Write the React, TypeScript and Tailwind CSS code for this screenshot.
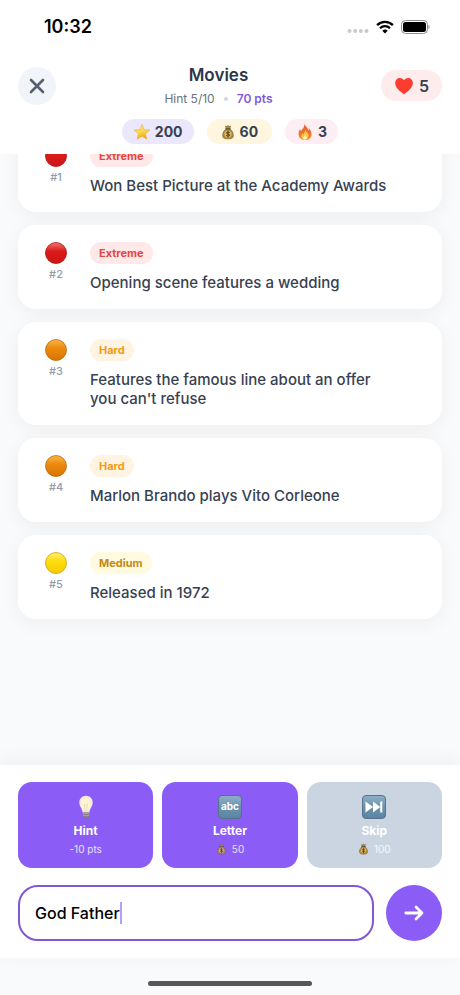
import React, { useLayoutEffect, useRef, useState } from 'react';
import clsx from 'clsx';

type Difficulty = 'Extreme' | 'Hard' | 'Medium';

interface HintItem {
  id: number;
  difficulty: Difficulty;
  text: string;
}

const hints: HintItem[] = [
  { id: 1, difficulty: 'Extreme', text: 'Won Best Picture at the Academy Awards' },
  { id: 2, difficulty: 'Extreme', text: 'Opening scene features a wedding' },
  { id: 3, difficulty: 'Hard', text: "Features the famous line about an offer you can't refuse" },
  { id: 4, difficulty: 'Hard', text: 'Marlon Brando plays Vito Corleone' },
  { id: 5, difficulty: 'Medium', text: 'Released in 1972' },
];

const badgeStyles: Record<Difficulty, string> = {
  Extreme: 'bg-[#fee8e8] text-[#e5453f]',
  Hard: 'bg-[#fff3e2] text-[#f59a14]',
  Medium: 'bg-[#fffae0] text-[#c48a12]',
};

const ballColors: Record<Difficulty, { top: string; mid: string; bottom: string; edge: string }> = {
  Extreme: { top: '#f0776f', mid: '#dc1a1a', bottom: '#d01414', edge: '#a81414' },
  Hard: { top: '#f9b64a', mid: '#ec8a0c', bottom: '#d87400', edge: '#b96a10' },
  Medium: { top: '#ffee70', mid: '#ffdd0c', bottom: '#f6cc00', edge: '#d0a010' },
};

function Ball({ difficulty }: { difficulty: Difficulty }) {
  const c = ballColors[difficulty];
  const id = `ball-${difficulty}`;
  return (
    <svg viewBox="0 0 22 22" className="h-[22px] w-[22px]" aria-hidden="true">
      <defs>
        <linearGradient id={id} x1="0" y1="0" x2="0" y2="1">
          <stop offset="0" stopColor={c.top} />
          <stop offset="0.42" stopColor={c.mid} />
          <stop offset="1" stopColor={c.bottom} />
        </linearGradient>
      </defs>
      <circle cx="11" cy="11" r="10.5" fill={`url(#${id})`} stroke={c.edge} strokeWidth="0.8" />
    </svg>
  );
}

function StarIcon() {
  return (
    <svg viewBox="0 0 18 18" className="h-[18px] w-[18px]" aria-hidden="true">
      <defs>
        <linearGradient id="star" x1="0" y1="0" x2="0.3" y2="1">
          <stop offset="0" stopColor="#fdf0a0" />
          <stop offset="0.55" stopColor="#fdd84e" />
          <stop offset="1" stopColor="#f2a81d" />
        </linearGradient>
      </defs>
      <path
        d="M9 1.6 11.1 6.7 16.8 7.1 12.4 10.8 13.9 16.2 9 13.2 4.1 16.2 5.6 10.8 1.2 7.1 6.9 6.7Z"
        fill="url(#star)"
        stroke="#eeb137"
        strokeWidth="0.7"
        strokeLinejoin="round"
      />
    </svg>
  );
}

function MoneyBag({ className }: { className: string }) {
  return (
    <svg viewBox="0 0 16 18" className={className} aria-hidden="true">
      <path
        d="M5.2 2.1 6.6 2.8 8 1.6 9.3 2.8 11 2.1 9.9 5.4C12.6 7.2 14.2 10 14.1 13.3 14.1 15.8 12.6 16.8 8 16.8S1.9 15.8 1.9 13.3C1.8 10 3.4 7.2 6.1 5.4Z"
        fill="#b08a3e"
        stroke="#79602c"
        strokeWidth="0.7"
        strokeLinejoin="round"
      />
      <path d="M5.5 5.4h5" stroke="#5f4a20" strokeWidth="1.3" strokeLinecap="round" />
      <circle cx="8" cy="11.3" r="4" fill="#d9b866" />
      <path
        d="M9.9 9.6C9.4 8.8 6.3 8.5 6.3 10.1c0 1.6 3.6.8 3.6 2.5 0 1.6-3.2 1.4-3.8.4M8 7.8v7"
        fill="none"
        stroke="#49391b"
        strokeWidth="1.1"
        strokeLinecap="round"
      />
    </svg>
  );
}

function FireIcon() {
  return (
    <svg viewBox="0 0 18 18" className="h-[18px] w-[18px]" aria-hidden="true">
      <defs>
        <linearGradient id="fire" x1="0" y1="0" x2="0" y2="1">
          <stop offset="0" stopColor="#ee5a2b" />
          <stop offset="1" stopColor="#f4842c" />
        </linearGradient>
      </defs>
      <path
        d="M8.2 1C9.6 3.4 12.1 4.8 12.2 7.7 12.8 7.2 13 6.3 12.8 5.3 14.5 7 15.6 9.1 15.5 11.4 15.4 14.8 12.7 17 9 17 5.2 17 2.7 14.6 2.6 11.3 2.5 9.2 3.3 7.5 4 6c.3 1 .6 1.6 1.3 2.1C5.6 6.2 8.9 4.9 8.2 1Z"
        fill="url(#fire)"
      />
      <path
        d="M9.6 6.5C9.6 9 12.8 10.1 12.6 13 12.5 15.4 11 16.7 9 16.7c-2.2 0-3.7-1.4-3.7-3.5 0-1.6.6-2.3 1.3-3.3.1 1 .4 1.3.8 1.5C8 9.7 9.1 8.9 9.6 6.5Z"
        fill="#fdc64b"
      />
      <path d="M9 11.5c.3 1.5 1.8 1.8 1.7 3.3 0 1.2-.7 1.9-1.7 1.9s-1.8-.7-1.8-1.9C7.2 13.4 8.6 13 9 11.5Z" fill="#fff2a6" />
    </svg>
  );
}

function HeartIcon() {
  return (
    <svg viewBox="0 0 20 18" className="h-[18px] w-5" aria-hidden="true">
      <path
        d="M10 3.2C8.9 1.6 7.4.9 5.7.9 3.2.9 1.2 3 1.2 6c0 4.6 4.3 8 8.8 11.2C14.5 14 18.8 10.6 18.8 6c0-3-2-5.1-4.5-5.1-1.7 0-3.2.7-4.3 2.3Z"
        fill="#fd3c30"
      />
    </svg>
  );
}

function BulbIcon() {
  return (
    <svg viewBox="0 0 24 24" className="h-6 w-6" aria-hidden="true">
      <defs>
        <radialGradient id="bulb" cx="0.5" cy="0.5" r="0.6">
          <stop offset="0" stopColor="#fff6c4" />
          <stop offset="0.5" stopColor="#fbf3dc" />
          <stop offset="1" stopColor="#ece0da" />
        </radialGradient>
      </defs>
      <path
        d="M12 .8c-3.9 0-6.7 2.9-6.7 6.6 0 4 2.9 5.6 3.4 10.3h6.6c.5-4.7 3.4-6.3 3.4-10.3C18.7 3.7 15.9.8 12 .8Z"
        fill="url(#bulb)"
      />
      <path d="M10.3 9.2 11.3 17M13.7 9.2 12.7 17M10.3 9.2l1.7 1 1.7-1" fill="none" stroke="#ecd59a" strokeWidth="0.7" />
      <path d="M8.7 17.5h6.6v3.3c0 1-1.2 1.5-1.6 2.4h-3.4c-.4-.9-1.6-1.4-1.6-2.4Z" fill="#817783" />
      <path d="M8.7 18.7h6.6M8.9 20.7h6.2" stroke="#c8bcc6" strokeWidth="0.7" />
    </svg>
  );
}

function Keycap({ id, children }: { id: string; children: React.ReactNode }) {
  return (
    <svg viewBox="0 0 24 24" className="h-6 w-6" aria-hidden="true">
      <defs>
        <linearGradient id={id} x1="0" y1="0" x2="0" y2="1">
          <stop offset="0" stopColor="#8fb0c6" />
          <stop offset="0.5" stopColor="#6b93b0" />
          <stop offset="1" stopColor="#5c83a3" />
        </linearGradient>
      </defs>
      <rect x="0.5" y="0.5" width="23" height="23" rx="3.5" fill={`url(#${id})`} stroke="#56738a" />
      {children}
    </svg>
  );
}

function AbcIcon() {
  return (
    <Keycap id="abc-key">
      <text x="12" y="15" textAnchor="middle" fontSize="10" fontWeight="700" fill="#fff" className="font-['Inter',sans-serif]">
        abc
      </text>
    </Keycap>
  );
}

function SkipIcon() {
  return (
    <Keycap id="skip-key">
      <path d="M3.5 6.5 11 12 3.5 17.5ZM11 6.5 18.3 12 11 17.5ZM18.2 6.5h2.1v11h-2.1Z" fill="#fff" />
    </Keycap>
  );
}

function StatusBar() {
  return (
    <div className="flex h-[54px] items-center justify-between pr-[30px] pl-11">
      <span className="text-lg leading-6 font-semibold text-black">10:32</span>
      <div className="flex items-center gap-[7px]">
        <svg viewBox="0 0 22 14" className="h-[14px] w-[22px]" fill="#c9c9c9" aria-hidden="true">
          <circle cx="2.5" cy="11" r="2" />
          <circle cx="8.2" cy="11" r="2" />
          <circle cx="13.8" cy="11" r="2" />
          <circle cx="19.5" cy="11" r="2" />
        </svg>
        <svg viewBox="0 0 18 14" className="h-[14px] w-[18px]" fill="none" stroke="#000" aria-hidden="true">
          <path d="M1.1 5.1a11.2 11.2 0 0 1 15.8 0" strokeWidth="2.3" />
          <path d="M4 8.2a7.1 7.1 0 0 1 10 0" strokeWidth="2.2" />
          <path d="M9 13.5 6.3 10.7a3.9 3.9 0 0 1 5.4 0Z" fill="#000" stroke="none" />
        </svg>
        <svg viewBox="0 0 29 14" className="h-[14px] w-[29px]" aria-hidden="true">
          <rect x="0.5" y="0.5" width="26" height="13" rx="4" fill="none" stroke="#8e8e8e" />
          <rect x="2" y="2" width="23" height="10" rx="2.5" fill="#000" />
          <path d="M27.5 4.8c1.3.5 1.3 3.9 0 4.4Z" fill="#8e8e8e" />
        </svg>
      </div>
    </div>
  );
}

function Header() {
  return (
    <header className="bg-white pb-2.5">
      <StatusBar />
      <div className="flex items-center justify-between px-[18px] pt-2.5">
        <button
          type="button"
          aria-label="Close"
          className="flex h-[38px] w-[38px] items-center justify-center rounded-full bg-[#f1f5f9]"
        >
          <svg viewBox="0 0 16 16" className="h-4 w-4" fill="none" stroke="#566072" strokeWidth="2.6" strokeLinecap="round">
            <path d="M2 2l12 12M14 2 2 14" />
          </svg>
        </button>
        <div className="text-center">
          <h1 className="text-[17px] leading-[22px] font-semibold text-[#2d3748]">Movies</h1>
          <div className="flex items-center justify-center gap-[9px] pt-[5px] text-xs leading-4">
            <span className="text-[#6b7280]">Hint 5/10</span>
            <span className="h-1 w-1 rounded-full bg-[#d3d8e2]" />
            <span className="font-semibold text-[#8257dd]">70 pts</span>
          </div>
        </div>
        <div className="flex h-[31px] items-center gap-[5px] rounded-full bg-[#feebeb] px-[13px]">
          <HeartIcon />
          <span className="text-base leading-5 font-semibold text-[#374151]">5</span>
        </div>
      </div>
      <div className="flex justify-center gap-[13px] pt-3 text-sm leading-[25px] font-bold text-[#374151]">
        <div className="flex items-center gap-1 rounded-full bg-[#ebe7fd] px-[11px]">
          <StarIcon />
          <span>200</span>
        </div>
        <div className="flex items-center gap-[5px] rounded-full bg-[#fef6de] px-[14px]">
          <MoneyBag className="h-4 w-[14px]" />
          <span>60</span>
        </div>
        <div className="flex items-center gap-1 rounded-full bg-[#fdeef3] px-[11px]">
          <FireIcon />
          <span>3</span>
        </div>
      </div>
    </header>
  );
}

function HintCard({ hint }: { hint: HintItem }) {
  return (
    <li className="flex gap-3 rounded-[18px] bg-white px-4 py-[17px] shadow-[0_4px_20px_rgba(0,0,0,0.05)]">
      <div className="flex w-11 shrink-0 flex-col items-center gap-0.5">
        <Ball difficulty={hint.difficulty} />
        <span className="text-[11px] leading-4 font-medium text-[#949ba6]">#{hint.id}</span>
      </div>
      <div className="min-w-0 flex-1 pr-8">
        <span
          className={clsx(
            'block w-fit rounded-full px-[9px] text-[11px] leading-[22px] font-bold',
            badgeStyles[hint.difficulty],
          )}
        >
          {hint.difficulty}
        </span>
        <p className="pt-[9px] text-[15px] leading-[19px] font-medium text-[#374151]">{hint.text}</p>
      </div>
    </li>
  );
}

interface ActionButtonProps {
  icon: React.ReactNode;
  label: string;
  cost: React.ReactNode;
  disabled?: boolean;
}

function ActionButton({ icon, label, cost, disabled }: ActionButtonProps) {
  return (
    <button
      type="button"
      disabled={disabled}
      className={clsx(
        'flex flex-1 flex-col items-center rounded-[14px] pt-[13px] pb-[11px] text-white',
        disabled ? 'bg-[#cbd5e1]' : 'bg-[#8b5cf6]',
      )}
    >
      {icon}
      <span className="pt-1 text-xs leading-4 font-bold">{label}</span>
      <span className="flex items-center gap-[5px] pt-0.5 text-[10px] leading-4 text-white/80">{cost}</span>
    </button>
  );
}

export default function App() {
  const [guess, setGuess] = useState('God Father');
  const listRef = useRef<HTMLElement>(null);

  // keep the newest hint in view
  useLayoutEffect(() => {
    if (listRef.current) listRef.current.scrollTop = listRef.current.scrollHeight;
  }, []);

  return (
    <div className="flex h-screen flex-col bg-[#f9fafc] font-['Inter','Liberation_Sans',sans-serif]">
      <Header />

      <main ref={listRef} className="min-h-0 flex-1 overflow-y-auto [scrollbar-width:none]">
        <ul className="flex flex-col gap-[13px] px-[18px] pt-[17px] pb-[146px]">
          {hints.map((hint) => (
            <HintCard key={hint.id} hint={hint} />
          ))}
        </ul>
      </main>

      <footer className="relative flex flex-col gap-[17px] bg-white px-[18px] py-[17px] shadow-[0_-4px_20px_rgba(0,0,0,0.05)]">
        <div className="flex gap-[9px]">
          <ActionButton icon={<BulbIcon />} label="Hint" cost="-10 pts" />
          <ActionButton
            icon={<AbcIcon />}
            label="Letter"
            cost={
              <>
                <MoneyBag className="h-3 w-[11px] opacity-80" />
                50
              </>
            }
          />
          <ActionButton
            icon={<SkipIcon />}
            label="Skip"
            disabled
            cost={
              <>
                <MoneyBag className="h-3 w-[11px]" />
                100
              </>
            }
          />
        </div>
        <form className="flex items-center gap-3" onSubmit={(e) => e.preventDefault()}>
          <label className="flex h-14 min-w-0 flex-1 cursor-text items-center rounded-[20px] border-2 border-[#8257d6] bg-white px-[15px]">
            <input
              type="text"
              aria-label="Your guess"
              value={guess}
              onChange={(e) => setGuess(e.target.value)}
              className="[field-sizing:content] max-w-full text-base leading-6 font-medium text-black caret-transparent outline-none"
            />
            <span className="h-[22px] w-0.5 bg-[#b79df5]" />
          </label>
          <button
            type="submit"
            aria-label="Submit guess"
            className="flex h-14 w-14 shrink-0 items-center justify-center rounded-full bg-[#8b5cf6]"
          >
            <svg
              viewBox="0 0 20 20"
              className="h-5 w-5"
              fill="none"
              stroke="#fff"
              strokeWidth="2.8"
              strokeLinecap="round"
              strokeLinejoin="round"
            >
              <path d="M1.8 10h16M12 4l6 6-6 6" />
            </svg>
          </button>
        </form>
      </footer>

      <div className="flex h-[37px] justify-center pt-[23px]">
        <div className="h-[5px] w-[164px] rounded-full bg-[#575757]" />
      </div>
    </div>
  );
}
